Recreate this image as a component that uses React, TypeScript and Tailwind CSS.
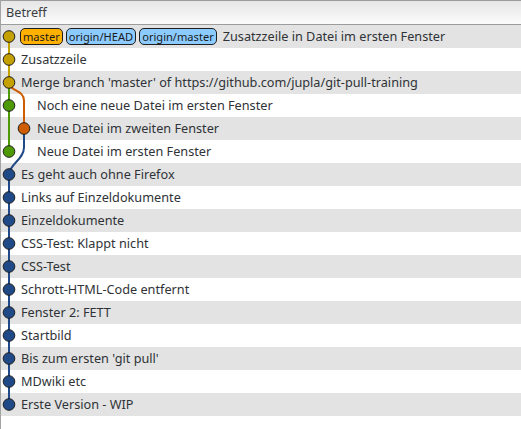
import React from 'react';

// gitk-style commit list: lane 0 at x=8, lane 1 at x=23 (svg coords)
const Y = (i: number) => 11.5 + 23 * i;

type Row = { msg: string; lane: number; color: string; refs?: { name: string; local?: boolean }[] };

const rows: Row[] = [
    { msg: 'Zusatzzeile in Datei im ersten Fenster', lane: 0, color: '#c4a000', refs: [{ name: 'master', local: true }, { name: 'origin/HEAD' }, { name: 'origin/master' }] },
    { msg: 'Zusatzzeile', lane: 0, color: '#c4a000' },
    { msg: "Merge branch 'master' of https://github.com/jupla/git-pull-training", lane: 0, color: '#c4a000' },
    { msg: 'Noch eine neue Datei im ersten Fenster', lane: 0, color: '#4e9a06' },
    { msg: 'Neue Datei im zweiten Fenster', lane: 1, color: '#ce5c00' },
    { msg: 'Neue Datei im ersten Fenster', lane: 0, color: '#4e9a06' },
    { msg: 'Es geht auch ohne Firefox', lane: 0, color: '#204a87' },
    { msg: 'Links auf Einzeldokumente', lane: 0, color: '#204a87' },
    { msg: 'Einzeldokumente', lane: 0, color: '#204a87' },
    { msg: 'CSS-Test: Klappt nicht', lane: 0, color: '#204a87' },
    { msg: 'CSS-Test', lane: 0, color: '#204a87' },
    { msg: 'Schrott-HTML-Code entfernt', lane: 0, color: '#204a87' },
    { msg: 'Fenster 2: FETT', lane: 0, color: '#204a87' },
    { msg: 'Startbild', lane: 0, color: '#204a87' },
    { msg: "Bis zum ersten 'git pull'", lane: 0, color: '#204a87' },
    { msg: 'MDwiki etc', lane: 0, color: '#204a87' },
    { msg: 'Erste Version - WIP', lane: 0, color: '#204a87' },
];

const Graph = () => (
    <svg className="absolute left-0 top-0 pointer-events-none" width={40} height={404} viewBox="0 0 40 404">
        <g fill="none" strokeWidth={2}>
            <path d={`M8 ${Y(0)} L8 ${Y(2)}`} stroke="#c4a000" />
            <path d={`M8 ${Y(2)} L8 ${Y(5)}`} stroke="#4e9a06" />
            <path d={`M8 ${Y(2)} C8 ${Y(2) + 9} 23 ${Y(2) + 7} 23 ${Y(2) + 18} L23 ${Y(4)}`} stroke="#ce5c00" />
            <path d={`M23 ${Y(4)} L23 ${Y(5) - 4} C23 ${Y(5) + 8} 8 ${Y(6) - 10} 8 ${Y(6)}`} stroke="#204a87" />
            <path d={`M8 ${Y(6)} L8 ${Y(16)}`} stroke="#204a87" />
        </g>
        {rows.map((r, i) => (
            <circle key={i} cx={r.lane === 0 ? 8 : 23} cy={Y(i)} r={5.8} fill={r.color} stroke="#1a1a1a" strokeWidth={1} />
        ))}
    </svg>
);

export default function App() {
    return (
        <div className="w-[521px] h-[429px] bg-white border-l border-[#a3a3a3] overflow-hidden text-[12.7px] text-[#2f3337]" style={{ fontFamily: '"Noto Sans", "Open Sans", sans-serif' }}>
            {/* Column header */}
            <div className="h-[25px] border-t border-b border-[#9c9c9c] bg-gradient-to-b from-[#e6e6e6] to-[#fbfbfb] flex items-center pl-[5px] text-[#3a3e42]">
                Betreff
            </div>

            {/* Commit rows */}
            <div className="relative">
                {rows.map((r, i) => (
                    <div key={i} className={`h-[23px] flex items-center gap-[3px] whitespace-nowrap ${i % 2 === 0 ? 'bg-[#e3e3e3]' : 'bg-white'} ${i >= 3 && i <= 5 ? 'pl-[35px]' : 'pl-[19px]'}`}>
                        {r.refs?.map((ref) => (
                            <span key={ref.name} className={`h-[17px] px-[2px] flex items-center rounded-[5px] border border-[#1e1e1e] text-[11.1px] text-[#1a1a1a] leading-none ${ref.local ? 'bg-[#ffb000]' : 'bg-[#8ccbff]'}`}>
                                {ref.name}
                            </span>
                        ))}
                        <span className={r.refs ? 'ml-[3px]' : 'ml-[1px]'}>{r.msg}</span>
                    </div>
                ))}
                <Graph />
            </div>
        </div>
    );
}
